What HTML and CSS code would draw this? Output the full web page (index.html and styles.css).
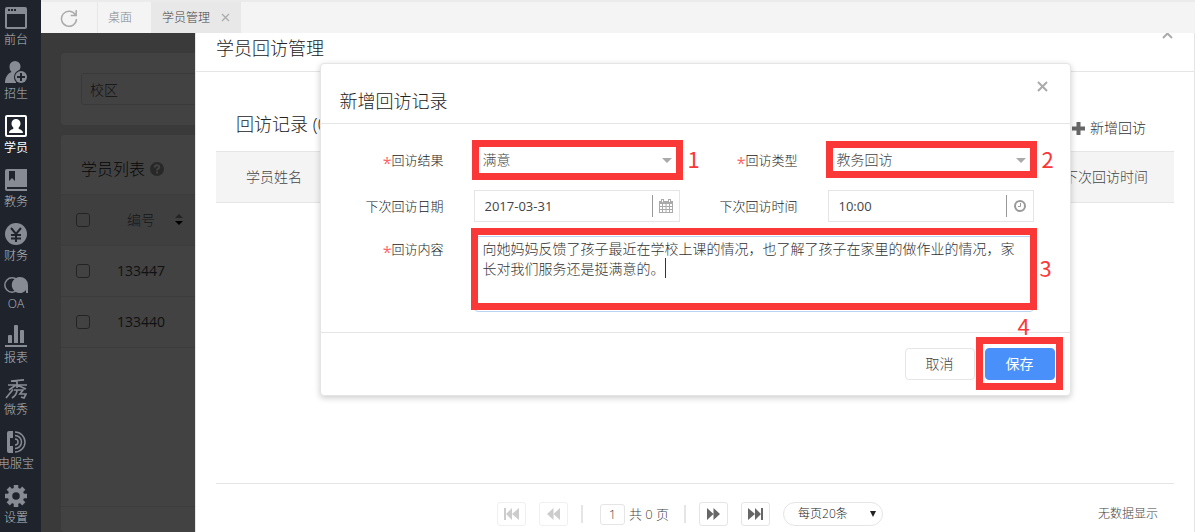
FILE: index.html
```html
<!DOCTYPE html>
<html lang="zh-CN">
<head>
<meta charset="utf-8">
<title>学员管理</title>
<link rel="stylesheet" href="styles.css">
</head>
<body>
<nav class="sidebar">
  <a class="nav-item" href="#"><svg width="22" height="22" viewBox="0 0 22 22"><path fill="currentColor" fill-rule="evenodd" d="M2 0h18a2 2 0 0 1 2 2v18a2 2 0 0 1-2 2H2a2 2 0 0 1-2-2V2a2 2 0 0 1 2-2zM2 7v13h18V7zM3 2v2h2V2zM6 2v2h2V2zM9 2v2h2V2z"/></svg><span>前台</span></a>
  <a class="nav-item" href="#"><svg width="22" height="22" viewBox="0 0 22 22"><path fill="currentColor" d="M10 0a5.500 5.500 0 0 1 5.500 5.500c0 1.800-.8 3.200-1.500 4A7 7 0 0 0 11 20.500V22H0c0-5 2-9 6.500-11C5 9.500 4.500 7.500 4.500 5.500A5.500 5.500 0 0 1 10 0z"/><circle cx="16" cy="16" r="7" fill="#1f242c"/><circle cx="16" cy="16" r="6" fill="currentColor"/><path stroke="#1f242c" stroke-width="2" d="M16 12v8M12 16h8"/></svg><span>招生</span></a>
  <a class="nav-item active" href="#"><svg width="22" height="22" viewBox="0 0 22 22"><rect x="1" y="1" width="20" height="20" rx="1" fill="none" stroke="currentColor" stroke-width="2"/><path fill="currentColor" d="M11 4a4.500 4.500 0 0 1 4.500 4.500c0 1.800-.8 3-1.800 4V14c2.500.5 4.300 2 4.300 4H4c0-2 1.800-3.500 4.300-4v-1.500c-1-1-1.800-2.200-1.800-4A4.500 4.500 0 0 1 11 4z"/></svg><span>学员</span></a>
  <a class="nav-item" href="#"><svg width="22" height="22" viewBox="0 0 22 22"><path fill="currentColor" fill-rule="evenodd" d="M2 0h20v18H2v2h20v2H2a2 2 0 0 1-2-2V2a2 2 0 0 1 2-2zM4 2v10l3-3 3 3V2z"/></svg><span>教务</span></a>
  <a class="nav-item" href="#"><svg width="22" height="22" viewBox="0 0 22 22"><circle cx="11" cy="11" r="11" fill="currentColor"/><path fill="none" stroke="#1f242c" stroke-width="2" d="M6 5l5 6 5-6M11 11v8M6 12h10M6 15.500h10"/></svg><span>财务</span></a>
  <a class="nav-item" href="#"><svg width="24" height="16" viewBox="0 0 24 16"><circle cx="8" cy="8" r="7.200" fill="none" stroke="currentColor" stroke-width="1.500"/><path fill="currentColor" d="M16 0a8 8 0 0 1 8 8v8h-2v-3a8 8 0 1 1-6-13z"/></svg><span>OA</span></a>
  <a class="nav-item" href="#"><svg width="22" height="22" viewBox="0 0 22 22"><path fill="currentColor" d="M0 20h22v2H0zM3 11a1 1 0 0 1 1-1h2a1 1 0 0 1 1 1v7H3zM9 1a1 1 0 0 1 1-1h2a1 1 0 0 1 1 1v17H9zM15 6a1 1 0 0 1 1-1h2a1 1 0 0 1 1 1v12h-4z"/></svg><span>报表</span></a>
  <a class="nav-item" href="#"><svg width="22" height="20" viewBox="0 0 22 20"><path fill="none" stroke="currentColor" stroke-width="1.700" d="M6 2.200l13-1.400M3 6h19M12 2v7M11 6L4 11M12 6l9 4M8 10.500L1 19M9 11h9l-3 4h6l-2 4-3-1M12 11c0 4-2 6-5 8"/></svg><span>微秀</span></a>
  <a class="nav-item" href="#"><svg width="20" height="22" viewBox="0 0 20 22"><path fill="currentColor" d="M3 0h4v7H4v8h3v7H3a2 2 0 0 1-2-2V2a2 2 0 0 1 2-2z"/><path fill="none" stroke="currentColor" stroke-width="1.500" d="M9 1a10 10 0 0 1 0 20M9 4.500a6.500 6.500 0 0 1 0 13M9 8a3 3 0 0 1 0 6"/></svg><span>电服宝</span></a>
  <a class="nav-item" href="#"><svg width="22" height="22" viewBox="0 0 22 22"><circle cx="11" cy="11" r="6" fill="none" stroke="currentColor" stroke-width="4.500"/><path stroke="currentColor" stroke-width="4.500" d="M11 0v4M11 18v4M0 11h4M18 11h4M3.200 3.200L6 6M16 16l2.800 2.800M3.200 18.800L6 16M16 6l2.800-2.800"/></svg><span>设置</span></a>
</nav>
<div class="main">
  <header class="tabs">
    <button class="tab refresh" aria-label="刷新"><svg width="18" height="18" viewBox="0 0 18 18"><path fill="none" stroke="#aaa" stroke-width="1.500" d="M15.500 6A7.500 7.500 0 1 0 16.500 10M16.200 1v5.500h-5.500"/></svg></button>
    <a class="tab" href="#">桌面</a>
    <div class="tab current"><a href="#">学员管理</a><button class="plain" aria-label="关闭标签"><svg width="9" height="9" viewBox="0 0 9 9"><path stroke="#aaa" stroke-width="1.200" d="M1 1l7 7M8 1L1 8"/></svg></button></div>
  </header>
  <div class="stage">
    <section class="list-page">
      <div class="card filter"><input class="campus" type="text" value="校区" aria-label="校区"></div>
      <div class="card list">
        <h2 class="list-title">学员列表 <svg width="14" height="14" viewBox="0 0 14 14"><circle cx="7" cy="7" r="7" fill="#999"/><path fill="none" stroke="#fff" stroke-width="2" d="M4.700 5.500c0-3 4.600-2.800 4.600-.3C9.300 6.700 7 6.700 7 8.500M7 9.500v2"/></svg></h2>
        <table class="students">
          <thead><tr><th class="check"><input type="checkbox" aria-label="全选"></th><th class="number">编号</th><th class="sort"><svg width="8" height="12" viewBox="0 0 8 12"><path fill="#888" d="M4 0l4 4H0z"/><path fill="#000" d="M0 7h8l-4 4z"/></svg></th></tr></thead>
          <tbody>
            <tr><td class="check"><input type="checkbox" aria-label="选择 133447"></td><td class="number">133447</td><td></td></tr>
            <tr><td class="check"><input type="checkbox" aria-label="选择 133440"></td><td class="number">133440</td><td></td></tr>
          </tbody>
        </table>
        <div class="list-foot"></div>
      </div>
    </section>
    <div class="mask"></div>
    <section class="drawer">
      <header class="drawer-head"><h1>学员回访管理</h1><button class="plain drawer-close" aria-label="关闭"><svg width="11" height="11" viewBox="0 0 11 11"><path stroke="#aaa" stroke-width="2" d="M1 1l9 9M10 1l-9 9"/></svg></button></header>
      <div class="drawer-body">
        <div class="section-head"><h2>回访记录 (0)</h2><button class="plain add"><svg width="13" height="13" viewBox="0 0 13 13"><path stroke="#666" stroke-width="4" d="M6.500 0v13M0 6.500h13"/></svg>新增回访</button></div>
        <table class="visits"><thead><tr><th>学员姓名</th><th class="end">下次回访时间</th></tr></thead></table>
      </div>
      <footer class="pager">
        <div class="pages">
          <button class="page-btn" disabled aria-label="首页"><svg width="15" height="12" viewBox="0 0 15 12"><path fill="currentColor" d="M0 0h2v12H0zM8 0v12L2 6zM15 0v12L8 6z"/></svg></button>
          <button class="page-btn" disabled aria-label="上一页"><svg width="13" height="12" viewBox="0 0 13 12"><path fill="currentColor" d="M6.500 0v12L0 6zM13 0v12L6.500 6z"/></svg></button>
          <i class="bar"></i>
          <label class="page-no"><input type="text" value="1">共 0 页</label>
          <i class="bar"></i>
          <button class="page-btn" aria-label="下一页"><svg width="13" height="12" viewBox="0 0 13 12"><path fill="currentColor" d="M0 0v12l6.500-6zM6.500 0v12L13 6z"/></svg></button>
          <button class="page-btn" aria-label="末页"><svg width="15" height="12" viewBox="0 0 15 12"><path fill="currentColor" d="M13 0h2v12h-2zM0 0v12l7-6zM7 0v12l6-6z"/></svg></button>
          <div class="size"><select aria-label="每页条数"><option>每页20条</option></select><svg width="6" height="6" viewBox="0 0 6 6"><path fill="#222" d="M0 0h6L3 6z"/></svg></div>
        </div>
        <span class="empty">无数据显示</span>
      </footer>

      <form class="modal">
        <header class="modal-head"><h2>新增回访记录</h2><button type="button" class="plain modal-close" aria-label="关闭"><svg width="11" height="11" viewBox="0 0 11 11"><path stroke="#aaa" stroke-width="2" d="M1 1l9 9M10 1l-9 9"/></svg></button></header>
        <div class="fields">
          <label for="result"><b>*</b>回访结果</label>
          <div class="field"><select id="result"><option>满意</option></select><svg class="arrow" width="10" height="5" viewBox="0 0 10 5"><path fill="#aaa" d="M0 0h10L5 5z"/></svg><span class="mark mark-result"></span><span class="step step-side">1</span></div>
          <label for="type"><b>*</b>回访类型</label>
          <div class="field"><select id="type"><option>教务回访</option></select><svg class="arrow" width="10" height="5" viewBox="0 0 10 5"><path fill="#aaa" d="M0 0h10L5 5z"/></svg><span class="mark mark-type"></span><span class="step step-side">2</span></div>
          <label for="date">下次回访日期</label>
          <div class="field picker"><input id="date" type="text" value="2017-03-31"><span class="picker-icon"><svg width="14" height="14" viewBox="0 0 14 14"><path fill="#aaa" fill-rule="evenodd" d="M0 2h2V0h3v2h4V0h3v2h2v12H0zM1 5v2h2V5zM4 5v2h2.500V5zM7.500 5v2H10V5zM11 5v2h2V5zM1 8v2h2V8zM4 8v2h2.500V8zM7.500 8v2H10V8zM11 8v2h2V8zM1 11v2h2v-2zM4 11v2h2.500v-2zM7.500 11v2H10v-2zM11 11v2h2v-2zM3 1v2h1V1zM10 1v2h1V1z"/></svg></span></div>
          <label for="time">下次回访时间</label>
          <div class="field picker"><input id="time" type="text" value="10:00"><span class="picker-icon"><svg width="12" height="12" viewBox="0 0 12 12"><circle cx="6" cy="6" r="5" fill="none" stroke="#999" stroke-width="2"/><path fill="none" stroke="#999" d="M6.500 3v3.500H4"/></svg></span></div>
          <label class="top" for="content"><b>*</b>回访内容</label>
          <div class="field wide"><textarea id="content">向她妈妈反馈了孩子最近在学校上课的情况，也了解了孩子在家里的做作业的情况，家长对我们服务还是挺满意的。</textarea><i class="caret"></i><span class="mark mark-content"></span><span class="step step-side step-content">3</span></div>
        </div>
        <footer class="modal-foot">
          <button type="button" class="btn">取消</button>
          <div class="save"><button type="button" class="btn primary">保存</button><span class="mark mark-save"></span><span class="step step-save">4</span></div>
        </footer>
      </form>
    </section>
  </div>
</div>
</body>
</html>
```
FILE: styles.css
```css
* { box-sizing: border-box; }
html, body { height: 100%; }
body {
  margin: 0;
  display: flex;
  overflow: hidden;
  font: 300 14px/20px "Open Sans", "Noto Sans CJK SC", sans-serif;
  color: #444;
}
a { color: inherit; text-decoration: none; }
h1, h2 { margin: 0; font-size: 18px; font-weight: 300; line-height: 24px; color: #222; }
input, select, textarea, button { font: inherit; color: inherit; margin: 0; }
svg { display: block; flex: none; }
table { border-collapse: collapse; width: 100%; }
th, td { padding: 0; font-weight: 300; text-align: left; }
.plain { border: 0; background: none; padding: 0; }

.sidebar {
  flex: none;
  width: 41px;
  padding: 7px 9px 0 0;
  background: #1f242c;
  overflow: hidden;
  display: flex;
  flex-direction: column;
  gap: 12px;
}
.nav-item {
  display: flex;
  flex-direction: column;
  align-items: center;
  gap: 2px;
  font-size: 12px;
  line-height: 18px;
  color: #868b94;
  white-space: nowrap;
}
.nav-item span { color: #b4b8be; }
.nav-item.active, .nav-item.active span { color: #fff; }
.nav-item.active span { font-weight: 400; }

.main { flex: 1; min-width: 0; display: flex; flex-direction: column; }
.tabs {
  flex: none;
  height: 33px;
  display: flex;
  background: #f4f4f4;
  border-top: 2px solid #ebebeb;
  font-size: 12px;
}
.tab {
  display: flex;
  align-items: center;
  padding: 0 19px 0 10px;
  color: #888;
}
.tab.refresh {
  width: 57px;
  justify-content: center;
  padding: 0;
  border: 0;
  border-right: 1px solid #e7e7e7;
  background: none;
}
.tab.current { background: #e8e8e8; color: #444; gap: 11px; padding: 0 11px; }

.stage { flex: 1; min-height: 0; position: relative; overflow: hidden; }
.list-page { height: 100%; padding: 20px 20px 0; background: #dfdfdf; display: flex; flex-direction: column; gap: 10px; }
.card { background: #fff; border-radius: 4px; }
.filter { padding: 20px; }
.campus { width: 300px; height: 32px; padding: 0 8px; border: 1px solid #ddd; border-radius: 3px; background: #fff; display: block; }
.list { flex: 1; }
.list-title { display: flex; align-items: center; gap: 5px; height: 59px; padding: 8px 20px 0; font-size: 16px; }
.students { table-layout: fixed; border-bottom: 1px solid #e8e8e8; }
.students th, .students td { height: 51px; border-top: 1px solid #e8e8e8; }
.students thead tr { background: #f4f4f4; }
.students th.number { color: #555; }
.students .check { width: 40px; padding-left: 15px; }
.check input { appearance: none; display: block; width: 14px; height: 14px; border: 1px solid #888; border-radius: 3px; }
.students .number { width: 80px; text-align: center; }
.students td.number { font-weight: 400; }
.students .sort svg { margin-left: -6px; }
.list-foot { margin-top: 158px; border-top: 1px solid #e8e8e8; }
.mask { position: absolute; inset: 0; background: rgba(0, 0, 0, .74); }

.drawer {
  position: absolute;
  inset: 0 0 0 154px;
  display: flex;
  flex-direction: column;
  background: #fff;
  border: 1px solid #e5e5e5;
  border-width: 0 1px;
}
.drawer-head { height: 39px; padding: 3px 21px 0 20px; display: flex; justify-content: space-between; align-items: flex-start; border-bottom: 1px solid #e5e5e5; }
.drawer-close { height: 3px; display: flex; align-items: flex-end; }
.drawer-body { flex: 1; padding: 40px 20px 0; }
.section-head { display: flex; justify-content: space-between; padding: 0 28px 0 20px; height: 39px; }
.add { display: flex; align-items: center; gap: 5px; height: 32px; color: #333; }
.visits thead { background: #f4f4f4; border: 1px solid #e5e5e5; border-width: 1px 0; }
.visits th { height: 51px; padding: 0 30px; color: #444; }
.visits .end { text-align: right; padding-right: 26px; }

.pager {
  margin: 0 20px;
  padding: 18px 16px 6px 6px;
  border-top: 1px solid #e5e5e5;
  display: grid;
  grid-template-columns: 1fr auto 1fr;
  align-items: center;
  font-size: 12px;
}
.pages { grid-column: 2; display: flex; align-items: center; gap: 13px; }
.page-btn { width: 29px; height: 24px; padding: 0; display: flex; align-items: center; justify-content: center; border: 1px solid #e5e5e5; border-radius: 3px; background: #fff; color: #666; }
.page-btn:disabled { color: #ccc; border-color: #f0f0f0; }
.bar { width: 2px; height: 18px; background: #e5e5e5; }
.page-no { display: flex; align-items: center; gap: 4px; margin: 0 2px 0 4px; white-space: nowrap; font-size: 13px; }
.page-no input { width: 25px; height: 21px; padding: 0; text-align: center; border: 1px solid #e5e5e5; border-radius: 3px; }
.size { position: relative; }
.size select { appearance: none; display: block; width: 100px; height: 24px; padding: 0 14px; border: 1px solid #e5e5e5; border-radius: 12px; background: #fff; color: #222; }
.size svg { position: absolute; right: 7px; top: 9px; }
.empty { grid-column: 3; justify-self: end; }

.modal {
  position: absolute;
  top: 30px;
  left: 0;
  right: 0;
  width: 751px;
  max-width: 96%;
  margin: 0 auto;
  background: #fff;
  border: 1px solid #e5e5e5;
  border-radius: 4px;
  box-shadow: 0 2px 6px rgba(0, 0, 0, .2);
}
.modal-head { display: flex; justify-content: space-between; height: 60px; padding: 17px 22px 0 19px; border-bottom: 1px solid #e5e5e5; }
.modal-head h2 { padding-top: 8px; }
.modal-close { height: 11px; }
.fields { display: grid; grid-template-columns: 80px minmax(0, 1fr) 118px minmax(0, 1fr); gap: 14px 0; padding: 20px 36px 20px 43px; }
.fields label { font-size: 13px; line-height: 32px; text-align: right; white-space: nowrap; color: #222; }
.fields b { font-size: 16px; font-weight: 400; line-height: 1; color: #f66; vertical-align: -4px; }
.fields .top { line-height: 26px; }
.field { position: relative; margin-left: 30px; height: 32px; }
.field select { appearance: none; display: block; width: 100%; height: 32px; padding: 0 8px; border: 1px solid #e5e5e5; background: #fff; }
.arrow { position: absolute; right: 8px; top: 14px; }
.picker { display: flex; align-items: center; border: 1px solid #e5e5e5; }
.picker input { flex: 1; min-width: 0; border: 0; padding: 0 10px; font-size: 13px; font-weight: 400; background: none; }
.picker-icon { width: 27px; height: 22px; display: flex; align-items: center; justify-content: center; border-left: 1px solid #999; }
.wide { grid-column: 2 / -1; height: 76px; }
.field textarea { display: block; width: 100%; height: 76px; padding: 2px 12px 2px 8px; border: 1px solid #b9d3f3; border-radius: 4px; resize: none; overflow: hidden; color: #333; }
.caret { position: absolute; left: 191px; top: 22px; width: 1px; height: 20px; background: #333; }
.modal-foot { display: flex; justify-content: flex-end; gap: 10px; padding: 15px; border-top: 1px solid #e5e5e5; }
.btn { display: block; width: 70px; height: 32px; padding: 0; border: 1px solid #e5e5e5; border-radius: 4px; background: #fff; }
.btn.primary { background: #4a90fa; border-color: #4a90fa; color: #fff; font-weight: 400; }
.save { position: relative; }

.mark { position: absolute; border: 7px solid #fb3838; pointer-events: none; }
.mark-result { inset: -4px -3px -4px -2px; }
.mark-type { inset: -3px -3px -2px -2px; }
.mark-content { inset: -8px -3px 2px -3px; }
.mark-save { inset: -11px -8px -10px -9px; }
.step { position: absolute; font: 22px/24px "Noto Sans CJK SC", sans-serif; color: #fb3838; }
.step-side { left: calc(100% + 8px); top: 2px; }
.step-content { left: calc(100% + 6px); top: 19px; }
.step-save { left: 33px; top: -35px; }
```
